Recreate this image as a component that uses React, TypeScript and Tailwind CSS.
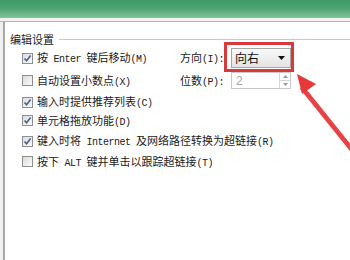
import React from "react";

const cjk = { fontFamily: '"Noto Sans CJK SC", "Liberation Sans", sans-serif' };

// Latin runs render narrower, like SimSun's half-width glyphs
function T({ s, className = "" }: { s: string; className?: string }) {
  const parts = s.split(/([\x20-\x7e]+)/).filter((p) => p.length > 0);
  return (
    <span className={"whitespace-nowrap " + className}>
      {parts.map((p, i) =>
        /^[\x20-\x7e]+$/.test(p) ? (
          <span key={i} className="text-[10px] tracking-[-0.5px] whitespace-pre" style={{ fontFamily: '"Liberation Mono", monospace' }}>
            {p}
          </span>
        ) : (
          <span key={i}>{p}</span>
        )
      )}
    </span>
  );
}

function Box({ checked }: { checked: boolean }) {
  return (
    <div className="w-[11px] h-[11px] border border-[#8e8f8f] bg-gradient-to-br from-[#dcdcdc] to-[#fbfbfb] flex items-center justify-center shrink-0">
      {checked && (
        <svg width="9" height="9" viewBox="0 0 9 9">
          <path d="M1.5 4.5 L3.6 6.8 L7.6 1.6" fill="none" stroke="#4a5f97" strokeWidth="1.6" />
        </svg>
      )}
    </div>
  );
}

function Row({ checked, label }: { checked: boolean; label: string }) {
  return (
    <div className="flex items-center gap-[4px] h-[20.5px]">
      <Box checked={checked} />
      <T s={label} className="text-[11px] text-[#1a1a1a]" />
    </div>
  );
}

export default function App() {
  return (
    <div className="w-[350px] h-[260px] bg-white overflow-hidden relative" style={cjk}>
      {/* title bar strip */}
      <div className="h-[18px] bg-gradient-to-b from-[#3f9a65] via-[#4ea573] to-[#84c39b]" />
      <div className="h-[3px] bg-[#f2f2f2]" />
      <div className="h-px bg-[#b4b4b4]" />

      <div className="flex h-[238px]">
        <div className="w-[5px] bg-[#f0f0f0] border-r-2 border-[#a8a8a8]" />
        <div className="flex-1 pl-[5px] pt-[9px]">
          {/* group header */}
          <div className="flex items-center gap-[5px] h-[16px]">
            <span className="text-[11px] text-[#1a1a1a]">编辑设置</span>
            <div className="flex-1 h-px bg-[#c9c9c9]" />
          </div>

          <div className="pl-[12px] pt-[1px]">
            <div className="flex items-center">
              <div className="w-[158px]">
                <Row checked label="按 Enter 键后移动(M)" />
              </div>
              <T s="方向(I):" className="inline-block text-[11px] text-[#1a1a1a] w-[51px]" />
              <div className="w-[60px] h-[20px] border border-[#a6a6a6] bg-gradient-to-b from-[#f9f9f9] to-[#e3e3e3] flex items-center justify-between pl-[3px] pr-[5px]">
                <span className="text-[12px] text-[#111]">向右</span>
                <svg width="7" height="4" viewBox="0 0 7 4">
                  <polygon points="0,0 7,0 3.5,4" fill="#111" />
                </svg>
              </div>
            </div>
            <div className="flex items-center mt-[2px]">
              <div className="w-[158px]">
                <Row checked={false} label="自动设置小数点(X)" />
              </div>
              <T s="位数(P):" className="inline-block text-[11px] text-[#1a1a1a] w-[51px]" />
              <div className="w-[60px] h-[17px] border border-[#c9c9c9] flex items-center justify-between pl-[4px]">
                <span className="text-[12px] text-[#a3a3a3]" style={{ fontFamily: '"Liberation Sans", sans-serif' }}>2</span>
                <div className="w-[11px] h-full border-l border-[#d6d6d6] flex flex-col">
                  <div className="flex-1 flex items-center justify-center border-b border-[#d6d6d6]">
                    <svg width="5" height="3" viewBox="0 0 5 3"><polygon points="0,3 5,3 2.5,0" fill="#9a9a9a" /></svg>
                  </div>
                  <div className="flex-1 flex items-center justify-center">
                    <svg width="5" height="3" viewBox="0 0 5 3"><polygon points="0,0 5,0 2.5,3" fill="#9a9a9a" /></svg>
                  </div>
                </div>
              </div>
            </div>
            <div className="mt-[1px]">
              <Row checked label="输入时提供推荐列表(C)" />
            </div>
            <div className="-mt-[2px]">
              <Row checked label="单元格拖放功能(D)" />
            </div>
            <Row checked label="键入时将 Internet 及网络路径转换为超链接(R)" />
            <Row checked={false} label="按下 ALT 键并单击以跟踪超链接(T)" />
          </div>
        </div>
      </div>

      {/* annotation: red box */}
      <div className="absolute left-[224px] top-[42px] w-[70px] h-[30px] border-[3px] border-[#d8393b]" />
      {/* annotation: red arrow */}
      <svg className="absolute left-0 top-0" width="350" height="260" viewBox="0 0 350 260">
        <polygon points="303,85 352,146 350,151 300,89" fill="#e8383a" opacity="0.95" />
        <polygon points="297,74 316,84 302,94" fill="#e8383a" />
      </svg>
    </div>
  );
}
